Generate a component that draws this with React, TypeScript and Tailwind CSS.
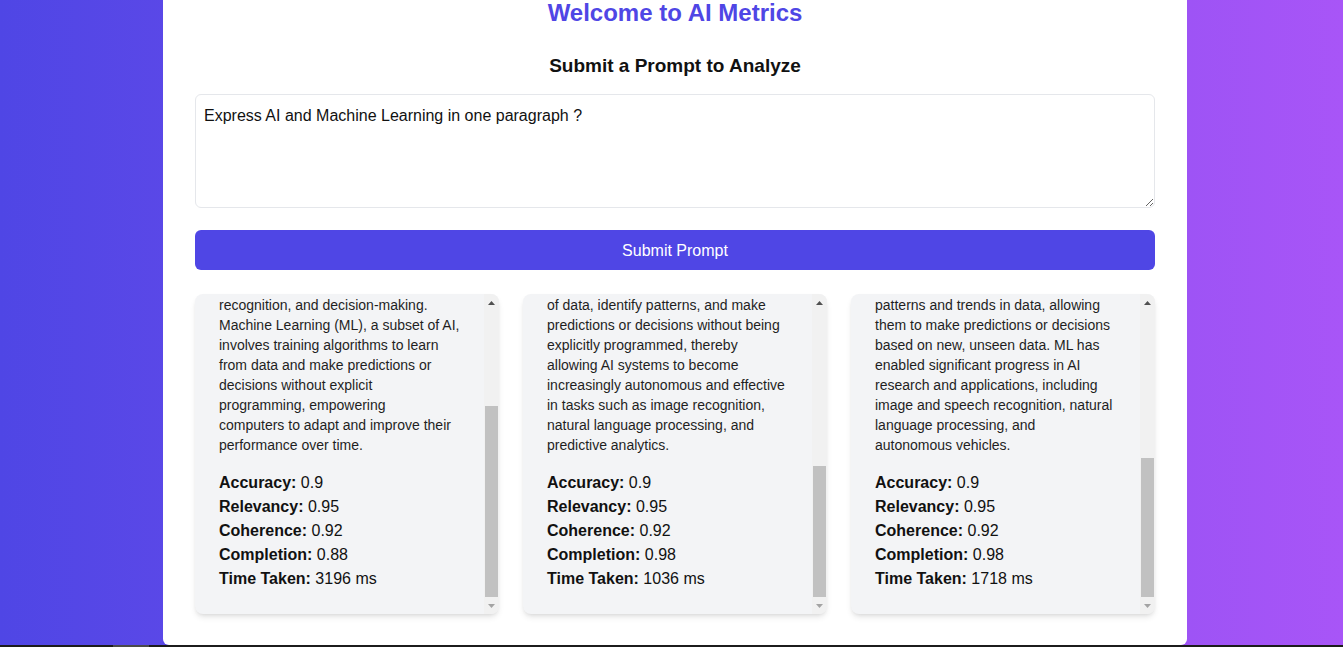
import React from "react";

type Result = {
  lines: string[];
  accuracy: string;
  relevancy: string;
  coherence: string;
  completion: string;
  time: string;
  spacer: string;
};

// the cards are scrolled to the bottom, so only the last lines show
const results: Result[] = [
  {
    lines: [
      "Artificial Intelligence (AI) refers to the",
      "simulation of human intelligence in",
      "machines, enabling them to perform",
      "tasks such as problem-solving, speech",
      "recognition, and decision-making.",
      "Machine Learning (ML), a subset of AI,",
      "involves training algorithms to learn",
      "from data and make predictions or",
      "decisions without explicit",
      "programming, empowering",
      "computers to adapt and improve their",
      "performance over time.",
    ],
    accuracy: "0.9",
    relevancy: "0.95",
    coherence: "0.92",
    completion: "0.88",
    time: "3196 ms",
    spacer: "h-[95px]",
  },
  {
    lines: [
      "Artificial Intelligence (AI) is the broad",
      "field of creating machines capable of",
      "performing tasks that normally require",
      "human intelligence, while Machine",
      "Learning (ML) is a subset of AI that",
      "uses algorithms to analyze vast amounts",
      "of data, identify patterns, and make",
      "predictions or decisions without being",
      "explicitly programmed, thereby",
      "allowing AI systems to become",
      "increasingly autonomous and effective",
      "in tasks such as image recognition,",
      "natural language processing, and",
      "predictive analytics.",
    ],
    accuracy: "0.9",
    relevancy: "0.95",
    coherence: "0.92",
    completion: "0.98",
    time: "1036 ms",
    spacer: "h-[155px]",
  },
  {
    lines: [
      "Artificial Intelligence (AI) refers to the",
      "development of computer systems that",
      "can perform tasks typically requiring",
      "human intelligence, such as reasoning",
      "and learning. Machine Learning (ML), a",
      "subset of AI, focuses on algorithms",
      "that enable computers to identify",
      "patterns and trends in data, allowing",
      "them to make predictions or decisions",
      "based on new, unseen data. ML has",
      "enabled significant progress in AI",
      "research and applications, including",
      "image and speech recognition, natural",
      "language processing, and",
      "autonomous vehicles.",
    ],
    accuracy: "0.9",
    relevancy: "0.95",
    coherence: "0.92",
    completion: "0.98",
    time: "1718 ms",
    spacer: "h-[147px]",
  },
];

function Scrollbar({ spacer }: { spacer: string }) {
  return (
    <div className="w-[15px] shrink-0 flex flex-col bg-[#f1f1f1]">
      <div className="h-[17px] flex items-center justify-center">
        <svg width="7" height="4" viewBox="0 0 7 4">
          <path d="M0 4 L3.5 0 L7 4 Z" fill="#505050" />
        </svg>
      </div>
      <div className="flex-1 flex flex-col">
        <div className={spacer} />
        <div className="flex-1 mx-[1px] bg-[#c1c1c1]" />
      </div>
      <div className="h-[17px] flex items-center justify-center">
        <svg width="7" height="4" viewBox="0 0 7 4">
          <path d="M0 0 L7 0 L3.5 4 Z" fill="#a3a3a3" />
        </svg>
      </div>
    </div>
  );
}

function ResultCard({ r }: { r: Result }) {
  const rows = [
    ["Accuracy:", r.accuracy],
    ["Relevancy:", r.relevancy],
    ["Coherence:", r.coherence],
    ["Completion:", r.completion],
    ["Time Taken:", r.time],
  ];
  return (
    <div className="h-80 flex bg-[#f3f4f6] rounded-lg shadow-md overflow-hidden">
      <div className="flex-1 min-w-0 flex flex-col justify-end overflow-hidden px-6 pb-[23px]">
        <p className="shrink-0 text-sm leading-5 text-[#1f1f1f] mb-4">
          {r.lines.map((line, i) => (
            <span key={i} className="block whitespace-nowrap">
              {line}
            </span>
          ))}
        </p>
        <div className="shrink-0 text-base leading-6 text-[#111]">
          {rows.map(([label, value]) => (
            <p key={label}>
              <span className="font-bold">{label}</span> {value}
            </p>
          ))}
        </div>
      </div>
      <Scrollbar spacer={r.spacer} />
    </div>
  );
}

export default function App() {
  return (
    <div className="h-[647px] overflow-hidden flex flex-col bg-[linear-gradient(to_right,#4f46e5,#a855f7)] font-['Liberation_Sans',Arial,sans-serif]">
      <div className="flex-1 min-h-0">
        <div className="-mt-[3px] ml-[163px] w-[1024px] bg-white rounded-b-md px-8 pb-[31px]">
          <h1 className="text-2xl leading-8 font-bold text-center text-[#4f46e5]">Welcome to AI Metrics</h1>
          <h2 className="mt-[23px] text-[19px] leading-7 font-semibold text-center text-[#111]">Submit a Prompt to Analyze</h2>
          <textarea
            rows={4}
            defaultValue="Express AI and Machine Learning in one paragraph ?"
            className="mt-[14px] block w-full h-[114px] border border-[#e5e7eb] rounded-md px-2 pt-[9px] pb-[7px] text-base leading-6 text-[#111] outline-none"
          />
          <button className="mt-[22px] block w-full h-10 pt-px rounded-md bg-[#4f46e5] text-white text-base">
            Submit Prompt
          </button>
          <div className="mt-6 grid grid-cols-3 gap-6">
            {results.map((r, i) => (
              <ResultCard key={i} r={r} />
            ))}
          </div>
        </div>
      </div>
      <div className="h-[2px] shrink-0 flex bg-[#1c1c1c]">
        <div className="ml-[113px] w-[36px] bg-[#4a4a4a]" />
      </div>
    </div>
  );
}
